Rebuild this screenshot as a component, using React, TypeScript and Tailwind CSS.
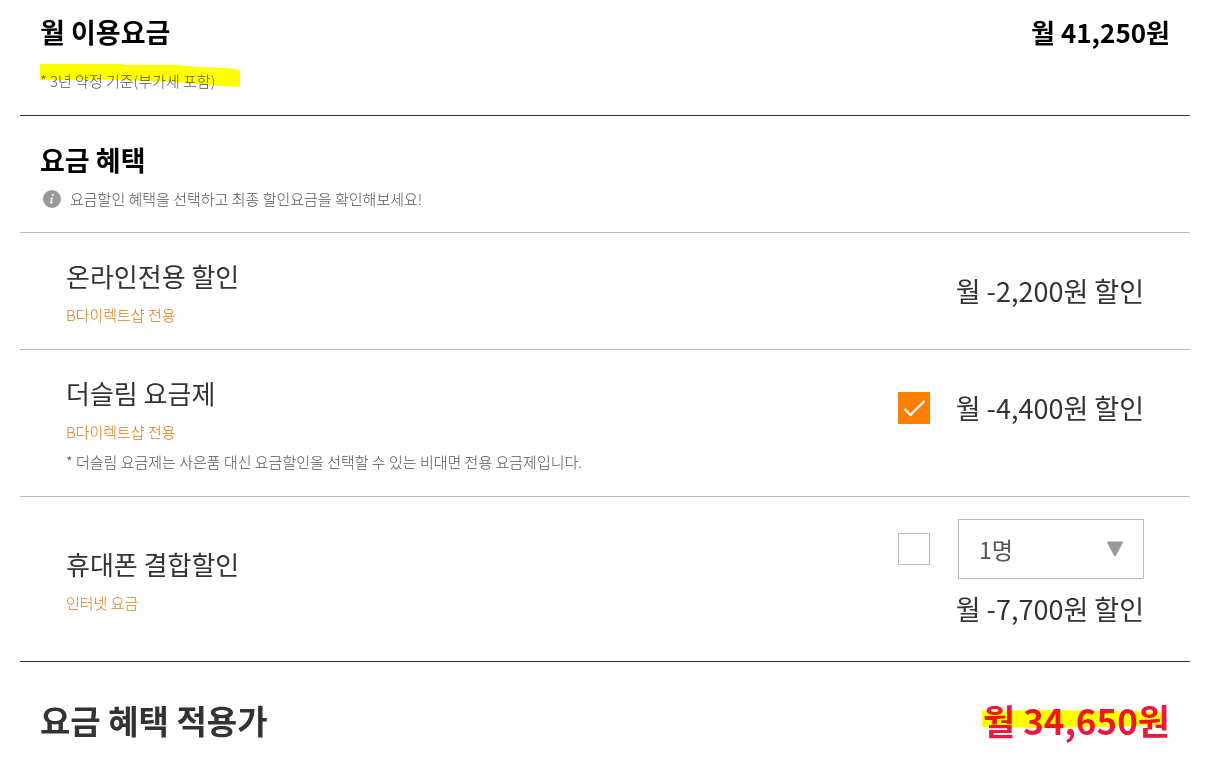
import { useState } from "react";
import type { ReactNode } from "react";

type CheckProps = {
  id: string;
  label: string;
  checked: boolean;
  onChange: (checked: boolean) => void;
};

const Check = ({ id, label, checked, onChange }: CheckProps) => {
  return (
    <span className="relative block size-8 shrink-0">
      <input
        id={id}
        type="checkbox"
        aria-label={label}
        checked={checked}
        onChange={(e) => onChange(e.target.checked)}
        className="peer block size-8 appearance-none border border-[#bbb] bg-white checked:border-[#ff8000] checked:bg-[#ff8000]"
      />
      <svg
        viewBox="0 0 32 32"
        className="pointer-events-none absolute inset-0 hidden size-8 peer-checked:block"
        fill="none"
        stroke="#fff"
        strokeWidth="2.2"
      >
        <path d="M6.5 17L12.5 23L26.5 9" />
      </svg>
    </span>
  );
};

type RowProps = {
  title: string;
  tag: string;
  note?: string;
  htmlFor?: string;
  children: ReactNode;
};

const BenefitRow = ({ title, tag, note, htmlFor, children }: RowProps) => {
  return (
    <li className="flex justify-between border-b border-[#bbb] px-[46px] last:items-center last:border-[#333]">
      <div className="pt-[25px] pb-[24px]">
        <h3 className="text-[26px] leading-9 text-[#333]">
          {htmlFor ? <label htmlFor={htmlFor}>{title}</label> : title}
        </h3>
        <p className="mt-[11px] text-[15px] leading-5 font-light text-[#e07a14]">
          {tag}
        </p>
        {note && (
          <p className="mt-[10px] text-[15px] leading-5 font-light text-[#555]">
            {note}
          </p>
        )}
      </div>
      {children}
    </li>
  );
};

const App = () => {
  const [slim, setSlim] = useState(true);
  const [mobile, setMobile] = useState(false);

  return (
    <main className="bg-white pr-[38px] pb-10 pl-5 font-['Noto_Sans_CJK_KR',sans-serif] text-[#333]">
      <section className="flex justify-between border-b border-[#333] px-5 pt-[14px] pb-[24px]">
        <div>
          <h2 className="text-[27px] leading-9 font-bold text-black">
            월 이용요금
          </h2>
          <div className="relative mt-[21px]">
            <p className="text-[15px] leading-5 font-light text-[#555]">
              * 3년 약정 기준(부가세 포함)
            </p>
            <svg
              viewBox="0 0 200 23"
              className="pointer-events-none absolute -top-[7px] left-0 h-[23px] w-[200px] mix-blend-multiply"
            >
              <path
                d="M0 0H82L84 1H136L160 3L186 4L200 6V23L180 22L160 20L135 18L80 16H0Z"
                fill="#ffff00"
              />
            </svg>
          </div>
        </div>
        <p className="text-[26px] leading-9 font-bold text-black">
          월 41,250원
        </p>
      </section>

      <section>
        <div className="border-b border-[#bbb] px-5 pt-[26px] pb-[23px]">
          <h2 className="text-[27px] leading-9 font-bold text-black">
            요금 혜택
          </h2>
          <p className="mt-[11px] flex items-center gap-[9px] pl-[3px] text-[15px] leading-5 font-light text-[#555]">
            <svg viewBox="0 0 18 18" className="size-[18px]">
              <circle cx="9" cy="9" r="9" fill="#999" />
              <circle cx="9.9" cy="5" r="1.1" fill="#eee" />
              <path
                d="M7.1 7.7L10.1 7.3L8.9 12.1C8.8 12.6 9.2 12.6 10.1 11.6L10.5 12C9.6 13.2 8.7 13.7 7.9 13.7C7.1 13.7 6.8 13.1 7 12.3L8 8.7C8.1 8.3 7.8 8.2 7 8.2Z"
                fill="#eee"
              />
            </svg>
            요금할인 혜택을 선택하고 최종 할인요금을 확인해보세요!
          </p>
        </div>

        <ul>
          <BenefitRow title="온라인전용 할인" tag="B다이렉트샵 전용">
            <p className="pt-10 text-[27px] leading-9">월 -2,200원 할인</p>
          </BenefitRow>

          <BenefitRow
            title="더슬림 요금제"
            tag="B다이렉트샵 전용"
            note="* 더슬림 요금제는 사은품 대신 요금할인을 선택할 수 있는 비대면 전용 요금제입니다."
            htmlFor="slim"
          >
            <div className="flex items-center gap-[26px] self-start pt-10">
              <Check
                id="slim"
                label="더슬림 요금제"
                checked={slim}
                onChange={setSlim}
              />
              <p className="text-[27px] leading-9">월 -4,400원 할인</p>
            </div>
          </BenefitRow>

          <BenefitRow
            title="휴대폰 결합할인"
            tag="인터넷 요금"
            htmlFor="mobile"
          >
            <div className="flex flex-col items-end gap-3 pt-[22px] pb-[34px]">
              <div className="flex items-center gap-7">
                <Check
                  id="mobile"
                  label="휴대폰 결합할인"
                  checked={mobile}
                  onChange={setMobile}
                />
                <div className="relative">
                  <select
                    aria-label="결합 인원"
                    className="block h-[60px] w-[186px] appearance-none border border-[#bbb] bg-white px-5 text-[23px] text-[#555]"
                  >
                    <option>1명</option>
                    <option>2명</option>
                    <option>3명</option>
                    <option>4명</option>
                  </select>
                  <svg
                    viewBox="0 0 16 16"
                    className="pointer-events-none absolute top-[22px] right-[21px] size-4"
                  >
                    <path
                      d="M1 0.5H15Q16.5 0.5 15.7 2L9 14.5Q8 16 7 14.5L0.3 2Q-0.5 0.5 1 0.5Z"
                      fill="#999"
                    />
                  </svg>
                </div>
              </div>
              <p className="text-[27px] leading-9">월 -7,700원 할인</p>
            </div>
          </BenefitRow>
        </ul>
      </section>

      <section className="flex items-center justify-between px-5 pt-[34px]">
        <h2 className="text-[33px] leading-12 font-bold">요금 혜택 적용가</h2>
        <div className="relative">
          <p className="text-[35px] leading-12 font-bold text-[#ee1744]">
            월 34,650원
          </p>
          <svg
            viewBox="0 0 180 20"
            preserveAspectRatio="none"
            className="pointer-events-none absolute top-[14px] right-2 h-5 w-[180px] mix-blend-multiply"
          >
            <path
              d="M0 1L60 0L120 1L180 2V15L120 17L60 18L0 17Z"
              fill="#ffff00"
            />
          </svg>
        </div>
      </section>
    </main>
  );
};

export default App;
